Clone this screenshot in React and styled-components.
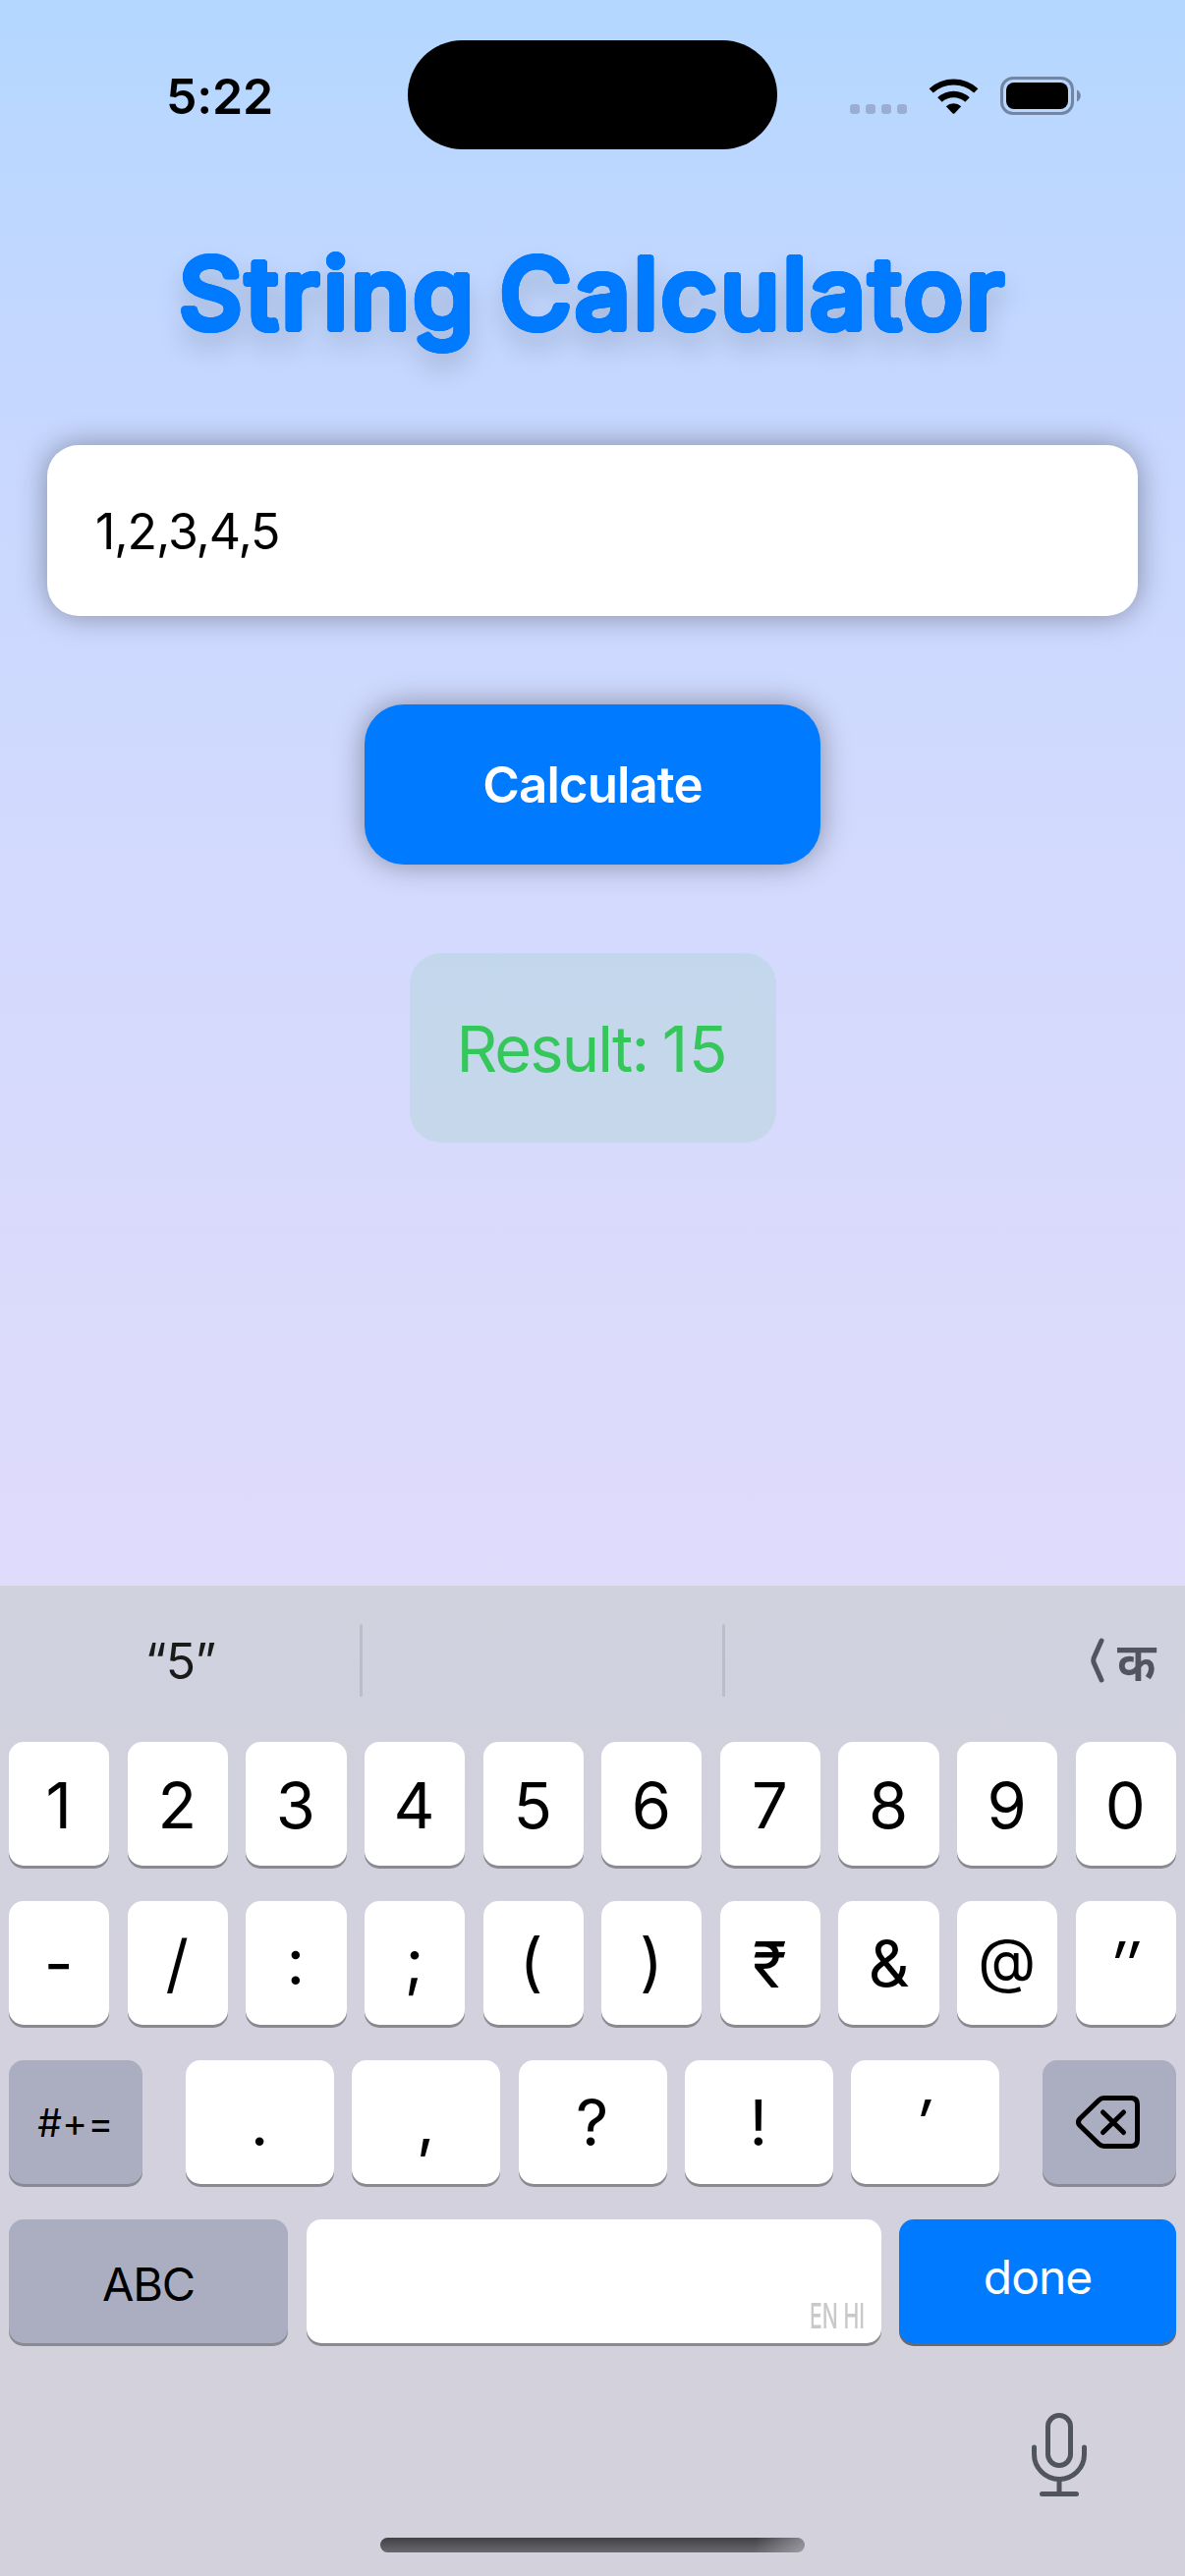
import React from 'react';
import styled, { createGlobalStyle } from 'styled-components';

const GlobalStyle = createGlobalStyle`
  *, *::before, *::after { box-sizing: border-box; }
  html, body { margin: 0; padding: 0; }
  body { font-family: Inter, "Liberation Sans", sans-serif; -webkit-font-smoothing: antialiased; }
  button, input { font-family: inherit; border: none; outline: none; margin: 0; padding: 0; }
`;

const Screen = styled.main`
  width: 1206px;
  height: 2622px;
  overflow: hidden;
  display: flex;
  flex-direction: column;
  background: linear-gradient(180deg, #b3d7ff 0px, #bcd7ff 160px, #c6d7ff 400px, #ced9fe 700px, #d5dafd 1000px, #dadafb 1300px, #dfdbfb 1614px);
`;

const StatusBar = styled.header`
  height: 195px;
  padding: 41px 106px 0 169px;
  display: grid;
  grid-template-columns: 246px 376px 1fr;
  align-items: start;
`;

const Time = styled.time`
  height: 114px;
  line-height: 115px;
  font-size: 50px;
  font-weight: 600;
  letter-spacing: -0.2px;
  color: #000;
`;

const Island = styled.div`
  height: 111px;
  border-radius: 56px;
  background: #000;
`;

const StatusIcons = styled.div`
  height: 111px;
  padding-top: 2px;
  display: flex;
  justify-content: flex-end;
  align-items: center;
`;

const Content = styled.section`
  height: 1419px;
  display: flex;
  flex-direction: column;
  align-items: center;
`;

const dilate = (r) =>
  Array.from({ length: 20 }, (_, i) => {
    const a = (i / 20) * Math.PI * 2;
    return `${(Math.cos(a) * r).toFixed(2)}px ${(Math.sin(a) * r).toFixed(2)}px 0 #007aff`;
  }).join(', ');

const Title = styled.h1`
  margin: 0;
  height: 258px;
  padding-top: 38px;
  line-height: 130px;
  font-size: 101px;
  font-weight: 500;
  letter-spacing: 2.4px;
  word-spacing: -6px;
  white-space: nowrap;
  color: #007aff;
  text-shadow: ${dilate(2.8)};
  filter: drop-shadow(0 15px 13px rgba(0, 0, 0, 0.15));
`;

const NumbersInput = styled.input`
  width: 1110px;
  height: 174px;
  padding: 2px 49px 0;
  flex: none;
  border-radius: 32px;
  background: #fff;
  color: #000;
  font-size: 50px;
  letter-spacing: -1.1px;
  box-shadow: 0 0 30px rgba(0, 0, 0, 0.36);
`;

const CalculateButton = styled.button`
  width: 464px;
  height: 163px;
  margin-top: 90px;
  flex: none;
  border-radius: 40px;
  background: #007aff;
  color: #fff;
  font-size: 51px;
  font-weight: 600;
  letter-spacing: -0.9px;
  box-shadow: 0 0 30px rgba(0, 0, 0, 0.36);
`;

const Result = styled.output`
  width: 373px;
  height: 193px;
  margin-top: 90px;
  padding-top: 2px;
  flex: none;
  display: flex;
  align-items: center;
  justify-content: center;
  border-radius: 32px;
  background: rgba(52, 199, 89, 0.1);
  color: #34c759;
  font-size: 65px;
  letter-spacing: -1.9px;
  white-space: pre;
`;

const ResultValue = styled.span`
  margin-left: -2px;
  letter-spacing: 1px;
`;

const Keyboard = styled.section`
  height: 1008px;
  display: flex;
  flex-direction: column;
  background: linear-gradient(180deg, #d0d2de 0%, #d2d1de 30%, #d3d1dc 100%);
`;

const Suggestions = styled.div`
  height: 159px;
  padding: 39px 0 46px;
  display: grid;
  grid-template-columns: 366px 3px 366px 3px 1fr;
  align-items: center;
`;

const Suggestion = styled.div`
  padding: 2px 0 0 1px;
  text-align: center;
  font-size: 50px;
  letter-spacing: -0.8px;
  color: #1a1a1a;
`;

const Separator = styled.div`
  height: 74px;
  border-radius: 2px;
  background: #bcbdc9;
`;

const Switcher = styled.div`
  display: flex;
  align-items: center;
  justify-content: flex-end;
  gap: 8px;
  padding-right: 30px;
  color: #53545f;
`;

const SwitcherGlyph = styled.span`
  font-family: "Noto Sans", "Noto Sans Devanagari", sans-serif;
  font-size: 55px;
  font-weight: 600;
  line-height: 72px;
  transform: scaleX(0.89);
  transform-origin: right center;
`;

const Rows = styled.div`
  display: grid;
  grid-template-rows: repeat(4, 126px);
  row-gap: 36px;
  padding: 0 9px;
`;

const TenKeyRow = styled.div`
  display: grid;
  grid-template-columns: repeat(10, 1fr);
  column-gap: 18.3px;
`;

const PunctuationRow = styled.div`
  display: grid;
  grid-template-columns: 136px 1fr 136px;
  column-gap: 44px;
`;

const PunctuationKeys = styled.div`
  display: flex;
  justify-content: space-between;
`;

const BottomRow = styled.div`
  display: grid;
  grid-template-columns: 284px 585px 282px;
  justify-content: space-between;
`;

const tones = {
  light: ['#fff', '#000', '#898a8f'],
  dark: ['#abaec1', '#000', '#898a92'],
  blue: ['#007aff', '#fff', '#67686e'],
};

const Key = styled.button`
  display: flex;
  align-items: center;
  justify-content: center;
  height: 126px;
  width: ${(p) => (p.$width ? `${p.$width}px` : '100%')};
  border-radius: 15px;
  background: ${(p) => tones[p.$tone || 'light'][0]};
  color: ${(p) => tones[p.$tone || 'light'][1]};
  box-shadow: 0 3px 0 ${(p) => tones[p.$tone || 'light'][2]};
  font-size: ${(p) => p.$size || 65}px;
  font-weight: 400;
  font-style: ${(p) => (p.$slanted ? 'oblique' : 'normal')};
  letter-spacing: ${(p) => p.$track || 0}px;
  padding-top: ${(p) => Math.max(0, p.$shift ?? 3)}px;
  padding-bottom: ${(p) => Math.max(0, -(p.$shift ?? 3))}px;
  padding-right: ${(p) => Math.max(0, p.$nudge ?? 1)}px;
`;

const SpaceKey = styled(Key)`
  align-items: flex-end;
  justify-content: flex-end;
  padding: 0 16px 10px 0;
`;

const Languages = styled.span`
  font-size: 36px;
  font-weight: 500;
  line-height: 36px;
  color: #c9c9c9;
  white-space: nowrap;
  transform: scaleX(0.59);
  transform-origin: right center;
`;

const Dock = styled.footer`
  flex: 1;
  display: flex;
  flex-direction: column;
  justify-content: space-between;
  padding: 69px 0 24px;
`;

const MicRow = styled.div`
  display: flex;
  justify-content: flex-end;
  padding-right: 98px;
`;

const HomeIndicator = styled.div`
  align-self: center;
  width: 432px;
  height: 15px;
  border-radius: 8px;
  background: linear-gradient(100deg, transparent 88%, rgba(190, 188, 200, 0.6) 100%),
    linear-gradient(180deg, #3f4145, #6a686f);
`;

const StatusGlyphs = () => (
  <svg width="237" height="40" viewBox="0 0 237 40">
    {[0, 16, 32, 48].map((x) => (
      <rect key={x} x={x + 2} y="28" width="10" height="10" rx="3.2" fill="#99aed2" />
    ))}
    <g transform="translate(82 1)">
      <path d="M0.6 11.2 A37 37 0 0 1 50.4 11.2 L46.2 15.5 A30.5 30.5 0 0 0 4.8 15.5 Z" fill="#000" />
      <path d="M9.2 20.2 A24 24 0 0 1 41.8 20.2 L37.3 24.8 A17.5 17.5 0 0 0 13.7 24.8 Z" fill="#000" />
      <path d="M17.8 29.2 A11.5 11.5 0 0 1 33.2 29.2 L26.4 36.4 Q25.5 37.3 24.6 36.4 Z" fill="#000" />
    </g>
    <rect x="156.5" y="1.5" width="72" height="36" rx="11.5" fill="none" stroke="#7286a3" strokeWidth="3" />
    <rect x="161" y="6" width="63" height="27" rx="8" fill="#000" />
    <path d="M233 13.5 C238 15.5 238 23.5 233 25.5 Z" fill="#7286a3" />
  </svg>
);

const Chevron = () => (
  <svg width="14" height="46" viewBox="0 0 14 46">
    <path d="M11 3 L3.2 20.5 Q2.4 23 3.2 25.5 L11 43" fill="none" stroke="currentColor" strokeWidth="5" strokeLinecap="round" strokeLinejoin="round" />
  </svg>
);

const DeleteGlyph = () => (
  <svg width="66" height="54" viewBox="0 0 66 54">
    <path d="M28.5 2.5 H56 Q62.5 2.5 62.5 9 V45 Q62.5 51.5 56 51.5 H28.5 Q25.5 51.5 23.3 49.3 L4 30.5 Q0.9 27 4 23.5 L23.3 4.7 Q25.5 2.5 28.5 2.5 Z" fill="none" stroke="#000" strokeWidth="5" strokeLinejoin="round" />
    <path d="M27.5 17 L48.5 37.5 M48.5 17 L27.5 37.5" fill="none" stroke="#000" strokeWidth="5" strokeLinecap="round" />
  </svg>
);

const MicGlyph = () => (
  <svg width="60" height="88" viewBox="0 0 60 88">
    <g fill="none" stroke="#50555d" strokeWidth="5" strokeLinecap="round">
      <rect x="18.5" y="4.5" width="23" height="51" rx="11.5" />
      <path d="M4.5 37 V44 A25.5 25.5 0 0 0 55.5 44 V37" />
      <path d="M30 70 V83 M12.5 84.5 H47.5" />
    </g>
  </svg>
);

const digits = ['1', '2', '3', '4', '5', '6', '7', '8', '9', '0'];

const symbols = [
  { label: '-', shift: 1 },
  { label: '/', shift: 1 },
  { label: ':', shift: -3 },
  { label: ';', shift: -3 },
  { label: '(', shift: -3, nudge: 4 },
  { label: ')', shift: -3 },
  { label: '₹', shift: 2 },
  { label: '&', shift: 1, nudge: 0 },
  { label: '@', shift: -6, size: 61 },
  { label: '″', shift: 3, nudge: 4, slanted: true },
];

const marks = ['.', ',', '?', '!', '′'];

export default function App() {
  return (
    <>
      <GlobalStyle />
      <Screen>
        <StatusBar>
          <Time>5:22</Time>
          <Island />
          <StatusIcons>
            <StatusGlyphs />
          </StatusIcons>
        </StatusBar>
        <Content>
          <Title>String Calculator</Title>
          <NumbersInput defaultValue="1,2,3,4,5" />
          <CalculateButton>Calculate</CalculateButton>
          <Result>
            {'Result: '}
            <ResultValue>15</ResultValue>
          </Result>
        </Content>
        <Keyboard>
          <Suggestions>
            <Suggestion>“5”</Suggestion>
            <Separator />
            <Suggestion />
            <Separator />
            <Switcher>
              <Chevron />
              <SwitcherGlyph>क</SwitcherGlyph>
            </Switcher>
          </Suggestions>
          <Rows>
            <TenKeyRow>
              {digits.map((d) => (
                <Key key={d}>{d}</Key>
              ))}
            </TenKeyRow>
            <TenKeyRow>
              {symbols.map((s) => (
                <Key key={s.label} $shift={s.shift} $nudge={s.nudge} $size={s.size} $slanted={s.slanted}>{s.label}</Key>
              ))}
            </TenKeyRow>
            <PunctuationRow>
              <Key $tone="dark" $size={39} $shift={1} $track={0.4} $nudge={0}>#+=</Key>
              <PunctuationKeys>
                {marks.map((m) => (
                  <Key key={m} $width={151} $shift={1} $nudge={m === '′' ? 5 : 1} $slanted={m === '′'}>{m}</Key>
                ))}
              </PunctuationKeys>
              <Key $tone="dark" $shift={0} $nudge={2}>
                <DeleteGlyph />
              </Key>
            </PunctuationRow>
            <BottomRow>
              <Key $tone="dark" $size={47} $shift={5} $track={-1.2} $nudge={0}>ABC</Key>
              <SpaceKey>
                <Languages>EN HI</Languages>
              </SpaceKey>
              <Key $tone="blue" $size={48} $shift={-9} $track={-1} $nudge={0}>done</Key>
            </BottomRow>
          </Rows>
          <Dock>
            <MicRow>
              <MicGlyph />
            </MicRow>
            <HomeIndicator />
          </Dock>
        </Keyboard>
      </Screen>
    </>
  );
}
